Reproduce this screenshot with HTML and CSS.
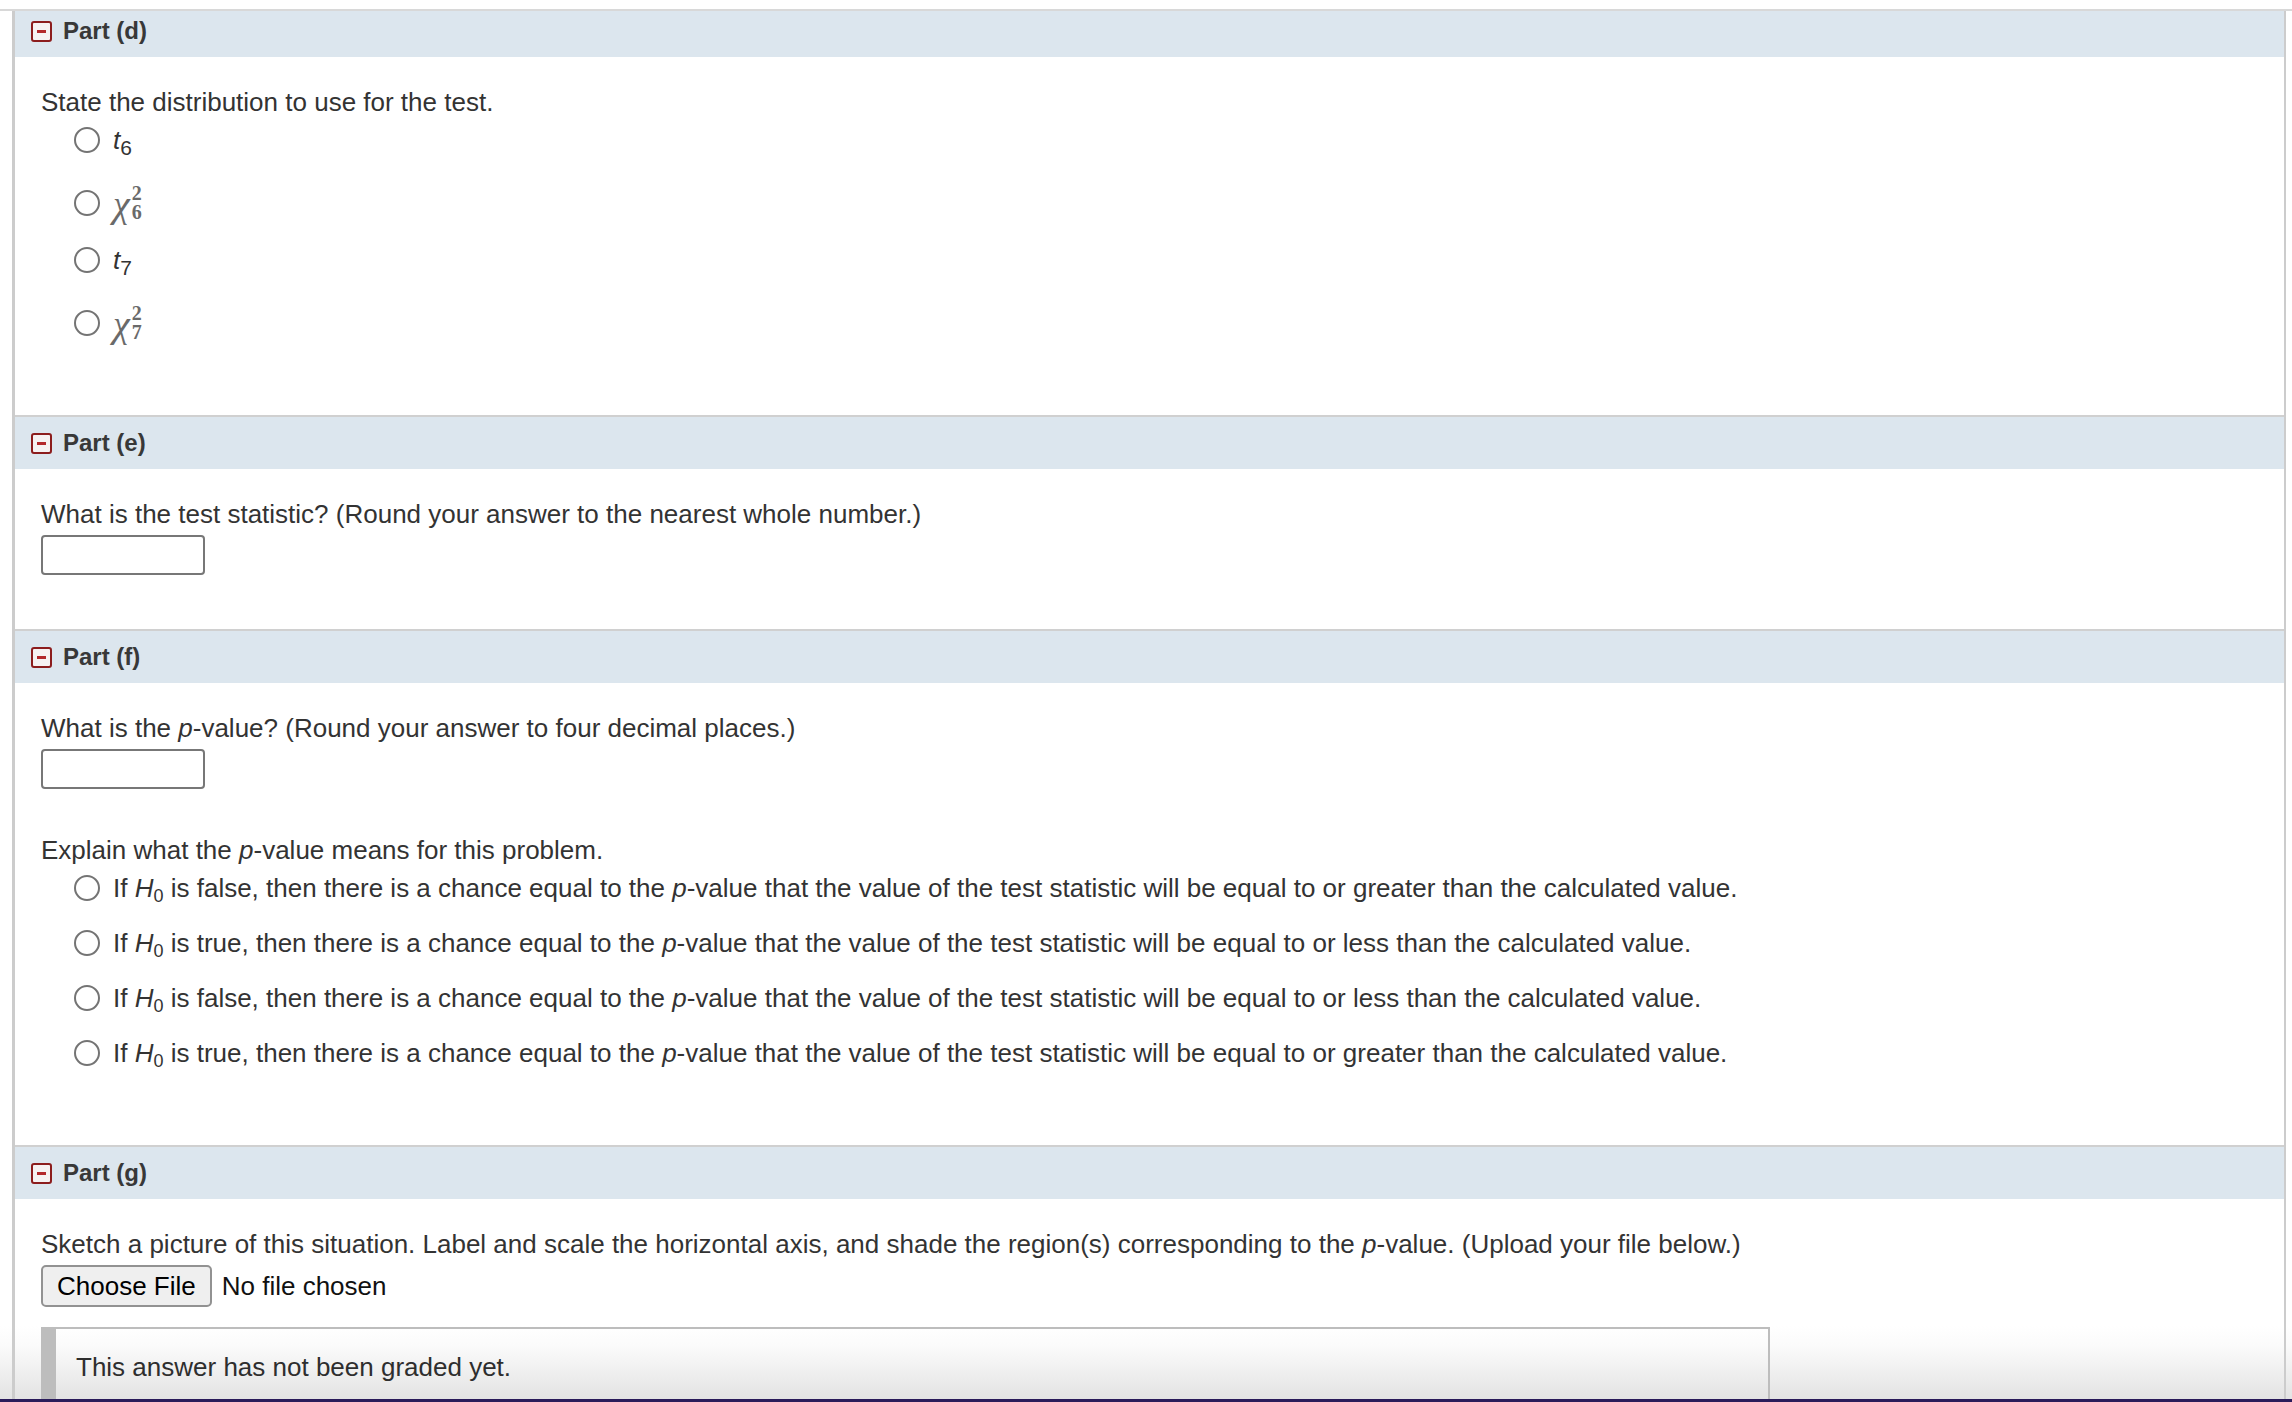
FILE: index.html
```html
<!DOCTYPE html>
<html lang="en">
<head>
<meta charset="utf-8">
<title>Parts d-g</title>
<link rel="stylesheet" href="styles.css">
</head>
<body>
<div class="page">
  <div class="topline"></div>
  <div class="panel">
    <section class="part part-first">
      <div class="part-head"><span class="toggle"></span><span class="part-title">Part (d)</span></div>
      <div class="part-body body-d">
        <p class="q">State the distribution to use for the test.</p>
        <ul class="choices">
          <li class="choice row-t"><span class="radio"></span><span class="lbl"><i>t</i><sub class="sub-t">6</sub></span></li>
          <li class="choice row-chi"><span class="radio"></span><span class="lbl chi"><span class="chi-sym">χ</span><span class="scripts"><span>2</span><span>6</span></span></span></li>
          <li class="choice row-t"><span class="radio"></span><span class="lbl"><i>t</i><sub class="sub-t">7</sub></span></li>
          <li class="choice row-chi"><span class="radio"></span><span class="lbl chi"><span class="chi-sym">χ</span><span class="scripts"><span>2</span><span>7</span></span></span></li>
        </ul>
      </div>
    </section>

    <section class="part">
      <div class="part-head"><span class="toggle"></span><span class="part-title">Part (e)</span></div>
      <div class="part-body body-e">
        <p class="q">What is the test statistic? (Round your answer to the nearest whole number.)</p>
        <div class="answer-box"></div>
      </div>
    </section>

    <section class="part">
      <div class="part-head"><span class="toggle"></span><span class="part-title">Part (f)</span></div>
      <div class="part-body body-f">
        <p class="q">What is the <i>p</i>-value? (Round your answer to four decimal places.)</p>
        <div class="answer-box"></div>
        <p class="q q-explain">Explain what the <i>p</i>-value means for this problem.</p>
        <ul class="choices choices-f">
          <li class="choice row-f"><span class="radio"></span><span class="lbl">If <i>H</i><sub>0</sub> is false, then there is a chance equal to the <i>p</i>-value that the value of the test statistic will be equal to or greater than the calculated value.</span></li>
          <li class="choice row-f"><span class="radio"></span><span class="lbl">If <i>H</i><sub>0</sub> is true, then there is a chance equal to the <i>p</i>-value that the value of the test statistic will be equal to or less than the calculated value.</span></li>
          <li class="choice row-f"><span class="radio"></span><span class="lbl">If <i>H</i><sub>0</sub> is false, then there is a chance equal to the <i>p</i>-value that the value of the test statistic will be equal to or less than the calculated value.</span></li>
          <li class="choice row-f"><span class="radio"></span><span class="lbl">If <i>H</i><sub>0</sub> is true, then there is a chance equal to the <i>p</i>-value that the value of the test statistic will be equal to or greater than the calculated value.</span></li>
        </ul>
      </div>
    </section>

    <section class="part">
      <div class="part-head"><span class="toggle"></span><span class="part-title">Part (g)</span></div>
      <div class="part-body body-g">
        <p class="q">Sketch a picture of this situation. Label and scale the horizontal axis, and shade the region(s) corresponding to the <i>p</i>-value. (Upload your file below.)</p>
        <div class="file-row"><span class="file-btn">Choose File</span><span class="file-name">No file chosen</span></div>
        <div class="graded">This answer has not been graded yet.</div>
      </div>
    </section>
  </div>
  <div class="bottom-bar"></div>
</div>
</body>
</html>
```

FILE: styles.css
```css
* { box-sizing: border-box; }

html, body {
  margin: 0;
  padding: 0;
  background: #ffffff;
}

body {
  font-family: "Liberation Sans", Arial, Helvetica, sans-serif;
  font-size: 26px;
  line-height: 36px;
  color: #333333;
}

.page {
  position: relative;
  height: 1402px;
  overflow: hidden;
  padding-top: 9px;
  background: linear-gradient(to bottom, #ffffff 0, #ffffff 1326px, #fbfbfb 1345px, #e3e3e3 1399px, #e3e3e3 100%);
}

.topline {
  height: 2px;
  background: #d8d8d8;
}

.panel {
  margin: 0 6px 0 12px;
  border-left: 3px solid #cccccc;
  border-right: 2px solid #cccccc;
}

.part {
  border-top: 2px solid #d0d0d0;
}

.part-first {
  border-top: none;
}

.part-head {
  display: flex;
  align-items: center;
  height: 52px;
  padding-left: 16px;
  background: #dce6ee;
}

.part-first .part-head {
  height: 46px;
  padding-bottom: 6px;
}

.toggle {
  position: relative;
  flex: none;
  width: 21px;
  height: 21px;
  margin-right: 11px;
  border: 2px solid #8c1d1d;
  border-radius: 3px;
  background: #f6f2f2;
}

.toggle::after {
  content: "";
  position: absolute;
  left: 4px;
  top: 7px;
  width: 9px;
  height: 3px;
  background: #b3292b;
}

.part-title {
  font-size: 24px;
  font-weight: bold;
  color: #383838;
}

.part-body {
  padding-left: 26px;
  padding-top: 27px;
}

.q {
  margin: 0;
  white-space: nowrap;
}

sub {
  font-size: 18px;
  line-height: 0;
  vertical-align: -5px;
}

.sub-t {
  font-size: 21px;
  vertical-align: -6px;
}

.choices {
  list-style: none;
  margin: 0;
  padding: 0;
}

.choice {
  display: flex;
  align-items: center;
  white-space: nowrap;
}

.radio {
  flex: none;
  width: 26px;
  height: 26px;
  margin-left: 33px;
  margin-right: 13px;
  border: 2px solid #747474;
  border-radius: 50%;
  background: #ffffff;
}

.row-t {
  height: 40px;
  margin-bottom: 14px;
}

.row-chi {
  height: 58px;
  margin-bottom: 8px;
}

.row-chi:last-child {
  margin-bottom: 0;
}

.body-d {
  height: 358px;
}

.chi {
  display: inline-flex;
  align-items: center;
  font-family: "Liberation Serif", "Times New Roman", serif;
  color: #6a6a6a;
}

.chi-sym {
  font-style: italic;
  font-size: 38px;
  line-height: 38px;
  padding-top: 2px;
}

.scripts {
  display: flex;
  flex-direction: column;
  margin-left: 2px;
  font-size: 20px;
  line-height: 19px;
  font-weight: bold;
}

.answer-box {
  width: 164px;
  height: 40px;
  margin-top: 3px;
  border: 2px solid #777777;
  border-radius: 4px;
  background: #ffffff;
}

.body-e {
  height: 160px;
}

.body-f {
  height: 462px;
}

.q-explain {
  margin-top: 43px;
}

.row-f {
  height: 40px;
  margin-bottom: 15px;
}

.row-f:last-child {
  margin-bottom: 0;
}

.file-row {
  display: flex;
  align-items: center;
  margin-top: 3px;
  color: #111111;
}

.file-btn {
  display: flex;
  align-items: center;
  height: 42px;
  padding: 0 14px;
  border: 2px solid #929292;
  border-radius: 5px;
  background: #efefef;
  color: #000000;
}

.file-name {
  margin-left: 10px;
}

.graded {
  width: 1729px;
  height: 120px;
  margin-top: 20px;
  padding: 20px 0 0 20px;
  border-top: 2px solid #bdbdbd;
  border-right: 2px solid #bdbdbd;
  border-left: 15px solid #bdbdbd;
  color: #2e2e2e;
}

.bottom-bar {
  position: absolute;
  left: 0;
  right: 0;
  bottom: 0;
  height: 3px;
  background: #2a1b5a;
}
```
